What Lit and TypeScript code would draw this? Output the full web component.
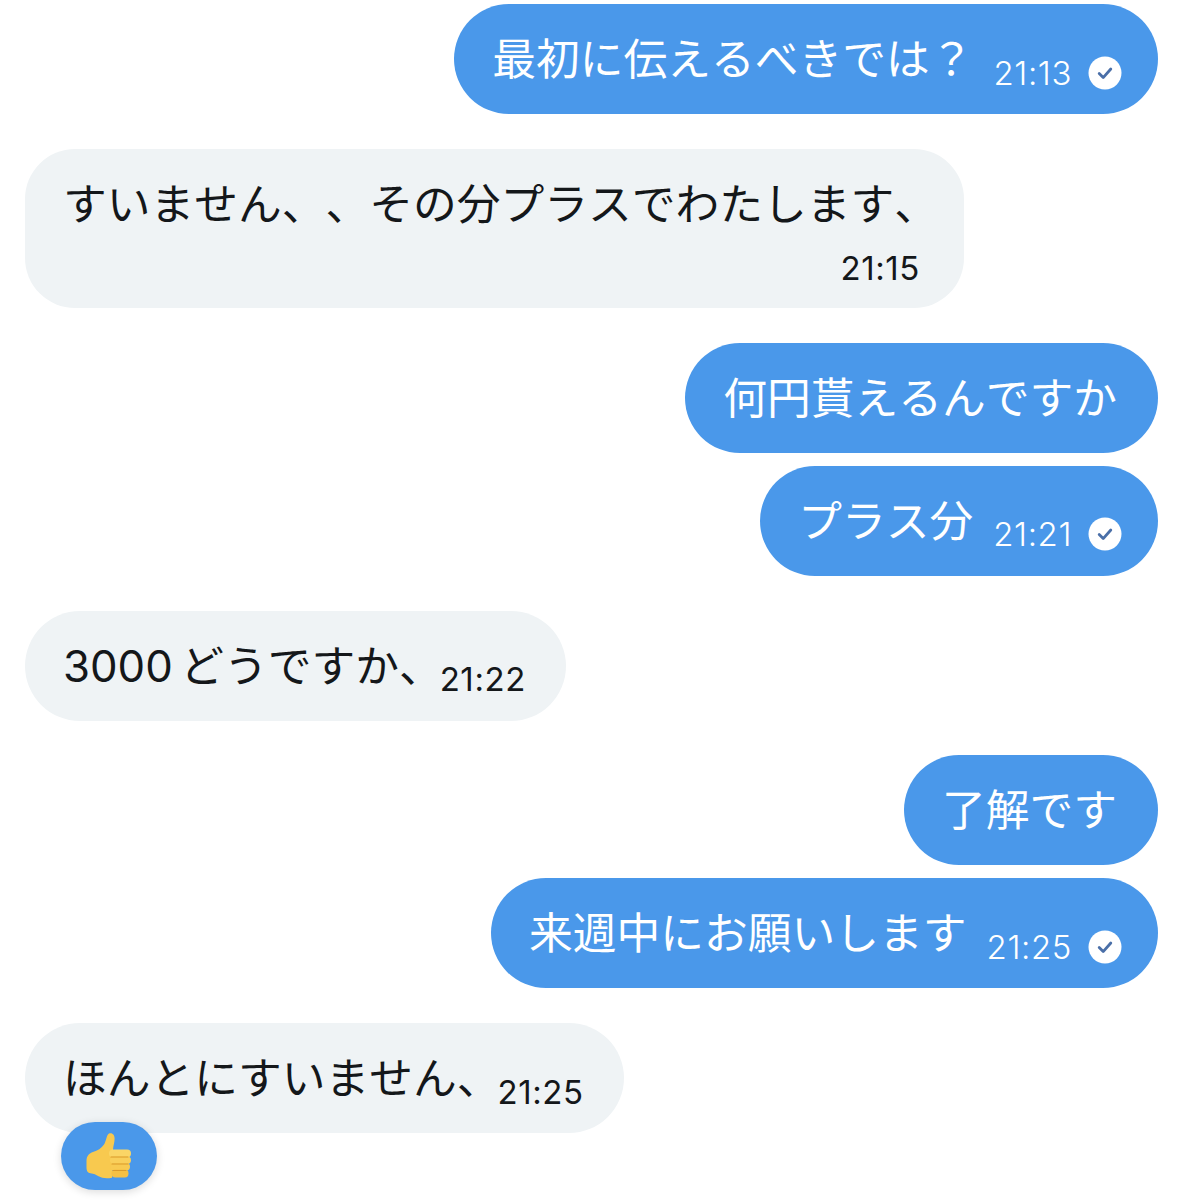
import { LitElement, html, css, svg } from "lit";
import { customElement } from "lit/decorators.js";

const check = html`<svg class="check" viewBox="0 0 34 34" aria-hidden="true"><circle cx="17" cy="17" r="16.5" fill="#fff"/><path d="M11.2 17.6l4 4 7.6-8.6" fill="none" stroke="#4a6fa8" stroke-width="2.8" stroke-linecap="round" stroke-linejoin="round"/></svg>`;

const thumb = svg`<svg class="thumb" viewBox="0 0 48 48" aria-hidden="true">
  <path d="M24 1.500c3.600-1 5.600 1.600 5.600 5.200 0 4-1.400 7-1.600 11l-1 28c-5 1-10 .6-13.500-1.400-2.600-1.500-4.500-2.800-8-3.100C3 41.300 1.500 39 1.500 35.500v-7c0-4.300 2.700-7.400 6.500-8.500 4.500-1.300 8.500-3.800 11-7.500 2.200-3.200 2.500-9.700 5-11z" fill="#f8c94f"/>
  <rect x="24" y="17.500" width="22" height="8" rx="4" fill="#fad566"/>
  <rect x="25" y="24.500" width="21" height="7.500" rx="3.700" fill="#f9cf5b"/>
  <rect x="25.500" y="31" width="19.500" height="7.500" rx="3.700" fill="#f8ca52"/>
  <rect x="26.500" y="37.500" width="17" height="8" rx="3.700" fill="#f5c044"/>
  <path d="M26 25h17M27 32h16M28 38.500h13" stroke="#d99a2b" stroke-width="1.100" stroke-linecap="round" fill="none"/>
</svg>`;

@customElement("app-root")
export class AppRoot extends LitElement {
  static styles = css`
    :host {
      display: block;
      width: 1183px;
      height: 1200px;
      overflow: hidden;
      background: #fff;
      font-family: Inter, "Noto Sans CJK JP", "Liberation Sans", sans-serif;
    }
    .thread {
      display: flex;
      flex-direction: column;
      gap: 34.85px;
      padding: 4px 25px 0;
    }
    .group {
      display: flex;
      flex-direction: column;
      gap: 13px;
    }
    .group.me { align-items: flex-end; }
    .group.them { align-items: flex-start; }
    .bubble {
      position: relative;
      box-sizing: border-box;
      display: flex;
      align-items: center;
      height: 110px;
      border-radius: 55px;
      padding: 0 41px 0 38px;
    }
    .me .bubble { background: #4a98ea; color: #fff; }
    .them .bubble { background: #eff3f5; color: #14171a; padding-right: 40px; }
    .text {
      font-size: 43.75px;
      line-height: 60px;
      white-space: nowrap;
      margin-top: 2px;
      text-spacing-trim: space-all;
      word-spacing: -5px;
      font-kerning: none;
    }
    .meta {
      display: flex;
      align-items: center;
      gap: 16px;
      margin-left: 20px;
      margin-top: 27px;
      margin-right: -5px;
    }
    .them .meta { margin-left: -3px; margin-right: 0; }
    .time {
      font-size: 33px;
      line-height: 36px;
      font-weight: 300;
      letter-spacing: 0.6px;
      font-family: Inter, "Liberation Sans", sans-serif;
    }
    .them .time { font-weight: 400; }
    .check { width: 34px; height: 34px; display: block; }
    .bubble.tall {
      display: block;
      height: 159px;
      border-radius: 50px;
      padding: 26px 26px 0 38px;
    }
    .tall .text { margin: 0; }
    .tall .time { display: block; text-align: right; margin: 15px 18px 0 0; }
    .reaction {
      position: absolute;
      left: 36px;
      top: 99px;
      width: 96px;
      height: 68px;
      border-radius: 34px;
      background: #4a98ea;
      box-shadow: 0 2px 8px rgba(0, 0, 0, 0.14);
      display: flex;
      align-items: center;
      justify-content: center;
    }
    .thumb { width: 48px; height: 48px; display: block; }
  `;

  private meBubble(text: string, time?: string) {
    return html`<div class="bubble">
      <span class="text">${text}</span>
      ${time
        ? html`<span class="meta"><span class="time">${time}</span>${check}</span>`
        : null}
    </div>`;
  }

  private themBubble(text: string, time: string, reaction = false) {
    return html`<div class="bubble">
      <span class="text">${text}</span>
      <span class="meta"><span class="time">${time}</span></span>
      ${reaction ? html`<div class="reaction">${thumb}</div>` : null}
    </div>`;
  }

  render() {
    return html`<div class="thread">
      <div class="group me">${this.meBubble("最初に伝えるべきでは？", "21:13")}</div>
      <div class="group them">
        <div class="bubble tall">
          <div class="text">すいません、、その分プラスでわたします、</div>
          <span class="time">21:15</span>
        </div>
      </div>
      <div class="group me">
        ${this.meBubble("何円貰えるんですか")}
        ${this.meBubble("プラス分", "21:21")}
      </div>
      <div class="group them">${this.themBubble("3000 どうですか、", "21:22")}</div>
      <div class="group me">
        ${this.meBubble("了解です")}
        ${this.meBubble("来週中にお願いします", "21:25")}
      </div>
      <div class="group them">${this.themBubble("ほんとにすいません、", "21:25", true)}</div>
    </div>`;
  }
}
